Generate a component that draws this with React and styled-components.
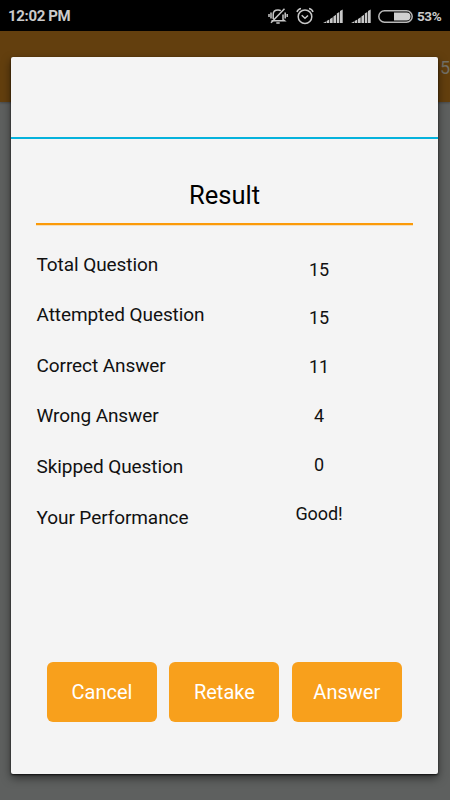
import React from "react";
import styled, { createGlobalStyle } from "styled-components";

const GlobalStyle = createGlobalStyle`
  * { box-sizing: border-box; }
  body { margin: 0; background: #5e605f; font-family: Roboto, sans-serif; }
`;

const Screen = styled.div`
  position: relative;
  display: flex;
  flex-direction: column;
  width: 450px;
  height: 800px;
  overflow: hidden;
  background: #5e605f;
`;

const StatusBar = styled.header`
  display: flex;
  align-items: center;
  justify-content: space-between;
  height: 31px;
  padding: 1px 8px 0;
  background: #000;
  color: #cbcbcb;
`;

const Clock = styled.span`
  font-size: 15px;
  font-weight: 700;
  line-height: 20px;
  letter-spacing: -0.35px;
`;

const StatusIcons = styled.div`
  display: flex;
  align-items: center;
  height: 29px;
`;

const Glyph = styled.svg`
  display: block;
  flex: none;
  margin-right: ${(p) => p.$gap}px;
`;

const Battery = styled.span`
  width: 25px;
  font-size: 13.5px;
  font-weight: 700;
  line-height: 20px;
  letter-spacing: -0.4px;
`;

const AppBar = styled.div`
  display: flex;
  justify-content: flex-end;
  height: 71px;
  padding-top: 25px;
  background: #633f0e;
  box-shadow: 0 1px 2px rgba(0, 0, 0, 0.25);
  color: #737067;
  font-size: 18px;
  line-height: 24px;
`;

const Dialog = styled.main`
  position: absolute;
  top: 57px;
  left: 11px;
  display: flex;
  flex-direction: column;
  width: 427px;
  height: 717px;
  border-radius: 2px;
  background: #f4f4f4;
  box-shadow: 0 1px 2px rgba(0, 0, 0, 0.75), 0 4px 10px rgba(0, 0, 0, 0.5);
  color: #111;
`;

const TitleArea = styled.div`
  height: 82px;
  border-bottom: 2px solid #05b2dc;
`;

const Heading = styled.h1`
  margin: 0 25px;
  height: 86px;
  padding-top: 40px;
  border-bottom: 2px solid #fb9a08;
  box-shadow: 0 1px 0 rgba(251, 154, 8, 0.25);
  color: #000;
  font-size: 25.5px;
  font-weight: 400;
  line-height: 32px;
  text-align: center;
`;

const Results = styled.section`
  display: grid;
  grid-template-columns: 188px 189px;
  align-items: start;
  margin: 14.6px 24.5px 0 25.5px;
  height: 422.4px;
`;

const Column = styled.div`
  display: flex;
  flex-direction: column;
  padding-top: ${(p) => p.$top}px;
  text-align: ${(p) => p.$align};
`;

const Cell = styled.span`
  height: ${(p) => p.$pitch}px;
  line-height: ${(p) => p.$pitch}px;
  font-size: ${(p) => p.$size}px;
  letter-spacing: -0.08px;
  white-space: nowrap;
`;

const Actions = styled.footer`
  display: flex;
  gap: 12.4px;
  padding-left: 36px;
`;

const ActionButton = styled.button`
  width: 110px;
  height: 60px;
  padding: 0;
  border: 0;
  border-radius: 6px;
  background: #f8a01c;
  color: #fff;
  font-family: inherit;
  font-size: 20px;
`;

const results = [
  ["Total Question", "15"],
  ["Attempted Question", "15"],
  ["Correct Answer", "11"],
  ["Wrong Answer", "4"],
  ["Skipped Question", "0"],
  ["Your Performance", "Good!"],
];

const MutedBell = () => (
  <Glyph $gap={8} width="20" height="18" viewBox="0 0 20 18" fill="none" stroke="#c8c8c8" strokeWidth="1.5">
    <path d="M3.500 13.700h13L15 12.500V7.500M5.200 12V7.500C5.200 4.700 7 3 10 3q1.700 0 2.800.700" />
    <path d="M8.300 16h3.400M3 5.500v6M17.200 5.500v6M1 7v3M19.200 7v3" />
    <path d="M3 15.800L16.500 1.800" />
  </Glyph>
);

const AlarmClock = () => (
  <Glyph $gap={9} width="18" height="18" viewBox="0 0 18 18" fill="none" stroke="#c8c8c8" strokeWidth="1.5">
    <circle cx="9" cy="9.7" r="6.8" />
    <path d="M5.700 8.200L9 11.200l3-2.700M1 5Q1.800 2.200 5 1.500M17 5Q16.200 2.200 13 1.500" />
  </Glyph>
);

const Signal = ({ gap }) => (
  <Glyph $gap={gap} width="20" height="15" viewBox="0 0 20 15" fill="#c8c8c8">
    <path d="M0 14L3 12.500V14zM3.600 12l2.700-1.500V14H3.600zM7 10L9.700 8.300V14H7zM10.400 7.500L13 5.700V14h-2.600zM13.800 4.500L16.300 3v11h-2.500zM17 2L19.700.500V14H17z" />
  </Glyph>
);

const BatteryIcon = () => (
  <Glyph $gap={4} width="35" height="13" viewBox="0 0 35 13">
    <rect x="0.8" y="0.8" width="33.4" height="11.4" rx="5.7" fill="none" stroke="#b8b8b8" strokeWidth="1.5" />
    <path d="M16 2.500h12.500Q32.500 2.500 32.500 6.500T28.500 10.500H16z" fill="#d0d0d0" />
  </Glyph>
);

export default function App() {
  return (
    <>
      <GlobalStyle />
      <Screen>
        <StatusBar>
          <Clock>12:02 PM</Clock>
          <StatusIcons>
            <MutedBell />
            <AlarmClock />
            <Signal gap={8} />
            <Signal gap={7} />
            <BatteryIcon />
            <Battery>53%</Battery>
          </StatusIcons>
        </StatusBar>
        <AppBar>5</AppBar>
        <Dialog role="dialog">
          <TitleArea />
          <Heading>Result</Heading>
          <Results>
            <Column $top={0} $align="left">
              {results.map(([label]) => (
                <Cell key={label} $pitch={50.6} $size={19}>{label}</Cell>
              ))}
            </Column>
            <Column $top={6} $align="center">
              {results.map(([label, value]) => (
                <Cell key={label} $pitch={48.8} $size={18}>{value}</Cell>
              ))}
            </Column>
          </Results>
          <Actions>
            <ActionButton>Cancel</ActionButton>
            <ActionButton>Retake</ActionButton>
            <ActionButton>Answer</ActionButton>
          </Actions>
        </Dialog>
      </Screen>
    </>
  );
}
